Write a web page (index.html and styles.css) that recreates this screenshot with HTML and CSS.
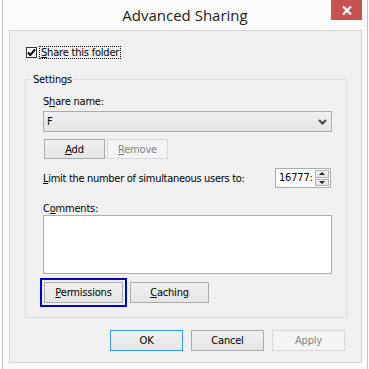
FILE: index.html
```html
<!DOCTYPE html>
<html lang="en">
<head>
    <meta charset="UTF-8">
    <title>Advanced Sharing</title>
    <link rel="stylesheet" href="styles.css">
</head>
<body>
    <div class="window">
        <div class="titlebar">
            <span></span>
            <div class="title">Advanced Sharing</div>
            <div class="close-wrap">
                <button class="close" aria-label="Close">
                    <svg width="10" height="9" viewBox="0 0 10 9">
                        <path d="M1 0.5 L9 8.5 M9 0.5 L1 8.5" stroke="#fff" stroke-width="2.2" fill="none"/>
                    </svg>
                </button>
            </div>
        </div>

        <div class="client">
            <label class="share-check">
                <span class="checkbox">
                    <svg width="9" height="9" viewBox="0 0 9 9">
                        <path d="M1 4.5 L3.3 7 L8 1.5" stroke="#000" stroke-width="2" fill="none"/>
                    </svg>
                </span>
                <span class="focus-text"><u>S</u>hare this folder</span>
            </label>

            <fieldset class="settings">
                <legend>Settings</legend>
                <div class="field-label">S<u>h</u>are name:</div>
                <div class="combo">
                    <span>F</span>
                    <svg width="9" height="6" viewBox="0 0 9 6">
                        <path d="M1 1 L4.5 4.5 L8 1" stroke="#444" stroke-width="2" fill="none"/>
                    </svg>
                </div>
                <div class="btn-row">
                    <button class="btn small"><u>A</u>dd</button>
                    <button class="btn small" disabled><u>R</u>emove</button>
                </div>
                <div class="limit-row">
                    <span class="limit-text"><u>L</u>imit the number of simultaneous users to:</span>
                    <div class="spin">
                        <span class="spin-value">16777:</span>
                        <div class="spin-btns">
                            <span class="spin-btn"><i class="tri up"></i></span>
                            <span class="spin-btn"><i class="tri down"></i></span>
                        </div>
                    </div>
                </div>
                <div class="field-label comments-label">C<u>o</u>mments:</div>
                <div class="textarea"></div>
                <div class="btn-row perm-row">
                    <button class="btn wide focused"><u>P</u>ermissions</button>
                    <button class="btn wide"><u>C</u>aching</button>
                </div>
            </fieldset>

            <div class="dialog-buttons">
                <button class="btn dlg default">OK</button>
                <button class="btn dlg">Cancel</button>
                <button class="btn dlg" disabled>Apply</button>
            </div>
        </div>
    </div>
</body>
</html>
```

FILE: styles.css
```css
body {
    margin: 0;
    width: 369px;
    height: 369px;
    overflow: hidden;
    background-color: #ffffff;
    font-family: "DejaVu Sans Condensed", "DejaVu Sans", sans-serif;
    font-size: 11px;
    letter-spacing: -0.2px;
    color: #000;
}

.window {
    margin-left: 2px;
    width: 364px;
    height: 369px;
    border-left: 1px solid #c4c4c4;
    border-right: 1px solid #c4c4c4;
    background-color: #fbfbfb;
}

.titlebar {
    display: grid;
    grid-template-columns: 1fr auto 1fr;
    height: 30px;
}

.title {
    font-family: "Open Sans", "Noto Sans", sans-serif;
    font-size: 15px;
    letter-spacing: 0;
    line-height: 30px;
    color: #222;
}

.close-wrap {
    display: flex;
    justify-content: flex-end;
    align-items: flex-start;
    padding-right: 5px;
}

.close {
    width: 31px;
    height: 20px;
    border: none;
    padding: 0;
    background-color: #c75050;
    display: flex;
    align-items: center;
    justify-content: center;
}

.client {
    margin-left: 6px;
    width: 353px;
    box-sizing: border-box;
    height: 333px;
    border: 1px solid #d2d2d2;
    background-color: #f0f0f0;
    padding-top: 15px;
}

.share-check {
    display: flex;
    align-items: center;
    margin-left: 16px;
    height: 12px;
}

.checkbox {
    width: 9px;
    height: 9px;
    border: 1px solid #333;
    background-color: #fff;
    display: flex;
    align-items: center;
    justify-content: center;
}

.focus-text {
    margin-left: 2px;
    padding: 0 1px;
    line-height: 11px;
    border: 1px dotted #000;
}

.settings {
    margin: 15px 14px 0 15px;
    padding: 9px 14px 14px 17px;
    border: 1px solid #dcdcdc;
    min-width: 0;
}

.settings legend {
    margin-left: -12px;
    padding: 0 2px;
    line-height: 13px;
}

.field-label {
    line-height: 13px;
}

.combo {
    margin-top: 3px;
    height: 21px;
    box-sizing: border-box;
    border: 1px solid #acacac;
    background: linear-gradient(#f0f0f0, #e5e5e5);
    display: flex;
    align-items: center;
    justify-content: space-between;
    padding: 0 4px 0 3px;
}

.btn-row {
    display: flex;
    gap: 2px;
    margin-top: 7px;
    padding-left: 1px;
}

.btn {
    font-family: inherit;
    font-size: 11px;
    letter-spacing: inherit;
    color: #000;
    height: 20px;
    padding: 0;
    border: 1px solid #acacac;
    background: linear-gradient(#f0f0f0, #e5e5e5);
}

.btn:disabled {
    color: #838383;
    border-color: #d9d9d9;
    background: #f4f4f4;
}

.btn.small {
    width: 61px;
}

.limit-row {
    display: flex;
    justify-content: space-between;
    align-items: center;
    margin-top: 9px;
    height: 20px;
}

.limit-text {
    letter-spacing: -0.3px;
}

.spin {
    width: 56px;
    height: 20px;
    box-sizing: border-box;
    border: 1px solid #acacac;
    background-color: #fff;
    display: flex;
    margin-right: 1px;
}

.spin-value {
    flex: 1;
    padding-left: 3px;
    line-height: 18px;
    white-space: nowrap;
}

.spin-btns {
    width: 14px;
    display: flex;
    flex-direction: column;
    gap: 1px;
    padding: 1px 1px 1px 0;
}

.spin-btn {
    flex: 1;
    border: 1px solid #b4b4b4;
    background: linear-gradient(#f4f4f4, #e2e2e2);
    display: flex;
    align-items: center;
    justify-content: center;
}

.tri {
    width: 0;
    height: 0;
    border-left: 3px solid transparent;
    border-right: 3px solid transparent;
}

.tri.up {
    border-bottom: 3px solid #222;
}

.tri.down {
    border-top: 3px solid #222;
}

.comments-label {
    margin-top: 14px;
}

.textarea {
    height: 59px;
    box-sizing: border-box;
    border: 1px solid #acacac;
    background-color: #fff;
}

.perm-row {
    margin-top: 8px;
    gap: 7px;
}

.btn.wide {
    width: 79px;
    height: 21px;
}

.btn.focused {
    box-shadow: 0 0 0 2px #f0f0f0, 0 0 0 4px #0000cc;
}

.dialog-buttons {
    display: flex;
    justify-content: flex-end;
    gap: 8px;
    margin: 12px 16px 0 0;
}

.btn.dlg {
    width: 73px;
    height: 21px;
}

.btn.default {
    border-color: #3399ff;
}
```
